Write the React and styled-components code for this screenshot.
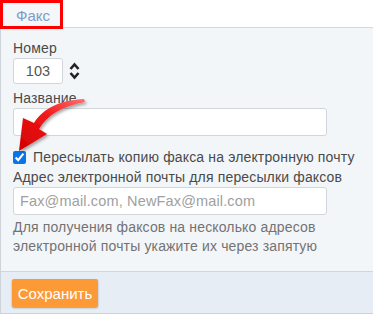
import React from 'react'
import styled, { createGlobalStyle } from "styled-components";

const GlobalStyle = createGlobalStyle`
  body {
    margin: 0;
    background: #ffffff;
    font-family: "Liberation Sans", Arial, sans-serif;
    font-size: 14px;
    color: #4a4a4a;
  }
`;

const App = () => {
  return (
    <Page>
      <GlobalStyle />
      <TabBar>
        <Tab>Факс</Tab>
      </TabBar>

      <Panel>
        <Label>Номер</Label>
        <NumberRow>
          <Input width="50px" height="26px" center defaultValue="103" />
          <Spinner />
        </NumberRow>

        <Label top="4px">Название</Label>
        <Input height="28px" />

        <CheckRow>
          <Check type="checkbox" defaultChecked />
          <span>Пересылать копию факса на электронную почту</span>
        </CheckRow>

        <Label>Адрес электронной почты для пересылки факсов</Label>
        <Input height="28px" placeholder="Fax@mail.com, NewFax@mail.com" />
        <Help>
          Для получения факсов на несколько адресов
          <br />
          электронной почты укажите их через запятую
        </Help>
      </Panel>

      <Footer>
        <SaveButton>Сохранить</SaveButton>
      </Footer>

      <Arrow />
    </Page>
  )
}

export default App

const Spinner = () => (
  <svg width="11" height="20" viewBox="0 0 11 20">
    <path d="M1.5 8 L5.5 3.5 L9.5 8" fill="none" stroke="#222" strokeWidth="2.6" strokeLinejoin="miter" />
    <path d="M1.5 12 L5.5 16.5 L9.5 12" fill="none" stroke="#222" strokeWidth="2.6" strokeLinejoin="miter" />
  </svg>
);

const Arrow = () => (
  <ArrowSvg width="100" height="70" viewBox="0 0 100 70">
    <defs>
      <linearGradient id="ag" x1="1" y1="0" x2="0" y2="1">
        <stop offset="0" stopColor="#ff7070" />
        <stop offset="0.45" stopColor="#f21818" />
        <stop offset="1" stopColor="#d00000" />
      </linearGradient>
      <filter id="sh" x="-20%" y="-20%" width="140%" height="140%">
        <feDropShadow dx="1.5" dy="2" stdDeviation="1.5" floodColor="#000" floodOpacity="0.35" />
      </filter>
    </defs>
    <path
      filter="url(#sh)"
      fill="url(#ag)"
      d="M84 7 C62 8 44 15 34 31 L23 26 L19 59 L47 42 L39 37 C47 23 63 14 85 10 Z"
    />
  </ArrowSvg>
);

const Page = styled.div`
  position: relative;
  width: 373px;
  height: 315px;
  overflow: hidden;
`;

const TabBar = styled.div`
  display: flex;
  height: 27px;
  border-bottom: 1px solid #d4d8dc;
`;

const Tab = styled.div`
  box-sizing: border-box;
  width: 63px;
  height: 29px;
  padding: 4px 0 0 13px;
  border: 3px solid #ff0000;
  background: #f4f6f9;
  color: #7c9dc9;
  font-size: 15px;
  line-height: 18px;
  z-index: 1;
`;

const Panel = styled.div`
  display: flex;
  flex-direction: column;
  align-items: flex-start;
  height: 244px;
  box-sizing: border-box;
  padding: 10px 0 0 12px;
  background: #f3f6f9;
  border-left: 1px solid #cdd3d9;
  border-bottom: 1px solid #cfd6dd;
  letter-spacing: 0.15px;
`;

const Label = styled.div`
  margin-top: ${p => p.top || "0"};
  line-height: 20px;
  color: #4a4a4a;
  white-space: nowrap;
`;

const NumberRow = styled.div`
  display: flex;
  align-items: center;
  gap: 6px;
`;

const Input = styled.input`
  box-sizing: border-box;
  width: ${p => p.width || "314px"};
  height: ${p => p.height};
  margin: 0;
  padding: 0 6px;
  border: 1px solid #d2d6da;
  border-radius: 3px;
  background: #ffffff;
  font-family: "Liberation Sans", Arial, sans-serif;
  font-size: 14.5px;
  letter-spacing: 0.15px;
  color: #555;
  text-align: ${p => (p.center ? "center" : "left")};
  outline: none;

  &::placeholder {
    color: #a0a0a0;
  }
`;

const CheckRow = styled.label`
  display: flex;
  align-items: center;
  gap: 7px;
  margin-top: 11px;
  line-height: 20px;
  color: #4a4a4a;
  white-space: nowrap;
`;

const Check = styled.input`
  width: 13px;
  height: 13px;
  margin: 0;
  accent-color: #0a75e8;
`;

const Help = styled.div`
  margin-top: 3px;
  line-height: 19px;
  color: #737373;
  white-space: nowrap;
`;

const Footer = styled.div`
  display: flex;
  align-items: flex-start;
  height: 42px;
  box-sizing: border-box;
  padding: 7px 0 0 11px;
  background: #e6edf4;
  border-left: 1px solid #cdd3d9;
  border-bottom: 1px solid #cbd2d8;
`;

const SaveButton = styled.button`
  width: 86px;
  height: 28px;
  padding: 0;
  border: none;
  border-radius: 2px;
  background: #fd9a38;
  color: #ffffff;
  font-family: "Liberation Sans", Arial, sans-serif;
  font-size: 15px;
  box-shadow: 0 1px 2px rgba(0, 0, 0, 0.35);
`;

const ArrowSvg = styled.svg`
  position: absolute;
  left: 0;
  top: 92px;
  pointer-events: none;
`;
